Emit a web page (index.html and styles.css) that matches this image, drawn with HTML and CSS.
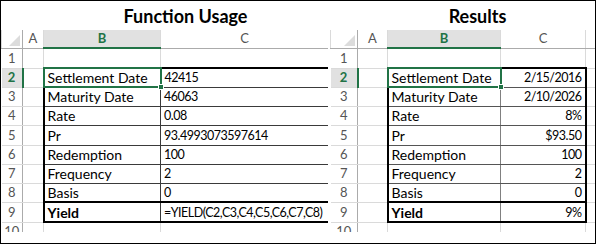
FILE: index.html
```html
<!DOCTYPE html>
<html>
<head>
<meta charset="utf-8">
<link rel="stylesheet" href="styles.css">
</head>
<body>
<div class="frame">
  <section class="sheet sheet-left">
    <h2 class="title">Function Usage</h2>
    <div class="viewport">
      <table class="grid grid-left">
        <colgroup><col class="c-rh"><col class="c-a"><col class="c-b"><col class="c-c"></colgroup>
        <tr class="hdr">
          <th class="corner"><svg class="tri" width="11" height="11" viewBox="0 0 11 11"><polygon points="11,0 11,11 0,11" fill="#dcdcdc"/></svg></th>
          <th>A</th><th class="sel-col">B</th><th>C</th>
        </tr>
        <tr><th class="rh">1</th><td></td><td></td><td></td></tr>
        <tr><th class="rh sel-row">2</th><td></td><td class="d dl dt active">Settlement Date<span class="handle"></span></td><td class="d dr dt val">42415</td></tr>
        <tr><th class="rh">3</th><td></td><td class="d dl">Maturity Date</td><td class="d dr val">46063</td></tr>
        <tr><th class="rh">4</th><td></td><td class="d dl">Rate</td><td class="d dr val">0.08</td></tr>
        <tr><th class="rh">5</th><td></td><td class="d dl">Pr</td><td class="d dr val">93.4993073597614</td></tr>
        <tr><th class="rh">6</th><td></td><td class="d dl">Redemption</td><td class="d dr val">100</td></tr>
        <tr><th class="rh">7</th><td></td><td class="d dl">Frequency</td><td class="d dr val">2</td></tr>
        <tr><th class="rh">8</th><td></td><td class="d dl">Basis</td><td class="d dr val">0</td></tr>
        <tr><th class="rh">9</th><td></td><td class="d dl db strong">Yield</td><td class="d dr db val">=YIELD(C2,C3,C4,C5,C6,C7,C8)</td></tr>
        <tr><th class="rh">10</th><td></td><td></td><td></td></tr>
      </table>
    </div>
  </section>
  <section class="sheet sheet-right">
    <h2 class="title">Results</h2>
    <div class="viewport">
      <table class="grid grid-right">
        <colgroup><col class="r-rh"><col class="r-a"><col class="r-b"><col class="r-c"><col class="r-d"></colgroup>
        <tr class="hdr">
          <th class="corner"><svg class="tri" width="11" height="11" viewBox="0 0 11 11"><polygon points="11,0 11,11 0,11" fill="#dcdcdc"/></svg></th>
          <th>A</th><th class="sel-col">B</th><th>C</th><th></th>
        </tr>
        <tr><th class="rh">1</th><td></td><td></td><td></td><td></td></tr>
        <tr><th class="rh sel-row">2</th><td></td><td class="d dl dt active">Settlement Date<span class="handle"></span></td><td class="d dr dt num val">2/15/2016</td><td></td></tr>
        <tr><th class="rh">3</th><td></td><td class="d dl">Maturity Date</td><td class="d dr num val">2/10/2026</td><td></td></tr>
        <tr><th class="rh">4</th><td></td><td class="d dl">Rate</td><td class="d dr num val">8%</td><td></td></tr>
        <tr><th class="rh">5</th><td></td><td class="d dl">Pr</td><td class="d dr num val">$93.50</td><td></td></tr>
        <tr><th class="rh">6</th><td></td><td class="d dl">Redemption</td><td class="d dr num val">100</td><td></td></tr>
        <tr><th class="rh">7</th><td></td><td class="d dl">Frequency</td><td class="d dr num val">2</td><td></td></tr>
        <tr><th class="rh">8</th><td></td><td class="d dl">Basis</td><td class="d dr num val">0</td><td></td></tr>
        <tr><th class="rh">9</th><td></td><td class="d dl db strong">Yield</td><td class="d dr db num val">9%</td><td></td></tr>
        <tr><th class="rh">10</th><td></td><td></td><td></td><td></td></tr>
      </table>
    </div>
  </section>
</div>
</body>
</html>
```

FILE: styles.css
```css
* { box-sizing: border-box; margin: 0; padding: 0; }
body { margin: 0; background: #fff; font-family: Lato, "Liberation Sans", sans-serif; }

.frame {
  width: 596px;
  height: 244px;
  border: 1px solid #000;
  display: flex;
  gap: 2px;
  overflow: hidden;
}
.sheet { display: flex; flex-direction: column; flex: none; }
.sheet-left { width: 327px; }
.sheet-right { width: 265px; }

.title {
  height: 29px;
  font-size: 18px;
  font-weight: 700;
  color: #000;
  display: flex;
  align-items: center;
  justify-content: center;
}
.sheet-left .title { padding-left: 42px; }
.sheet-right .title { padding-left: 30px; }

.viewport { height: 202px; overflow: hidden; }

.grid {
  border-collapse: collapse;
  table-layout: fixed;
  font-size: 14px;
  color: #000;
}
.grid-left { width: 327px; }
.grid-right { width: 267px; }
.c-rh { width: 21px; } .c-a { width: 21px; } .c-b { width: 117px; } .c-c { width: 168px; }
.r-rh { width: 27px; } .r-a { width: 30px; } .r-b { width: 113px; } .r-c { width: 85px; } .r-d { width: 12px; }

.grid tr { height: 19px; }
.grid tr.hdr { height: 18px; }
.grid tr:nth-child(2) { height: 20px; }
.grid tr:nth-child(6), .grid tr:nth-child(10) { height: 20px; }

.grid td, .grid th {
  border: 1px solid #dadada;
  padding: 0 3px;
  white-space: nowrap;
  overflow: hidden;
  text-align: left;
  font-weight: 400;
  line-height: 17px;
  vertical-align: middle;
}
.grid td.val {
  font-size: 12.5px;
  letter-spacing: -0.5px;
}

.hdr th {
  font-size: 13px;
  color: #555;
  text-align: center;
  border-bottom: 1px solid #ababab;
  border-top: none;
}
.hdr th.corner { position: relative; padding: 0; border-right: 1px solid #ababab; }
.tri { position: absolute; right: 2px; bottom: 2px; }
.hdr th.sel-col {
  background: #e1e1e1;
  color: #217346;
  font-weight: 700;
  border-bottom: 2px solid #217346;
}
.rh {
  font-size: 13px;
  color: #555;
  text-align: center !important;
  padding: 0 !important;
  border-left: none !important;
  border-right: 1px solid #ababab !important;
}
.rh.sel-row {
  background: #e1e1e1;
  color: #217346;
  font-weight: 700 !important;
  border-right: 2px solid #217346 !important;
}

.grid td.d { border: 1px solid #3a3a3a; }
.grid td.dl { border-left: 2px solid #000; }
.grid td.dr { border-right: 2px solid #000; }
.grid td.dt { border-top: 2px solid #000; }
.grid td.db { border-top: 2px solid #000; border-bottom: 2px solid #000; }
.grid-right td.d { border-bottom-color: #555; }
.grid-right td.dl { border-right: 1px solid #808080; }
.grid-right td.dl.active { border-right: 2px solid #217346; }
.grid-right td.dr { border-right: 2px solid #000; border-left-color: #808080; }
.grid-right td.db { border-top: 2px solid #000; border-bottom: 2px solid #000; }
.grid-right td.dt { border-top: 2px solid #000; }
.grid td.active { border: 2px solid #217346; position: relative; overflow: visible; }
.grid td.num { text-align: right; padding-right: 3px; }
.strong { font-weight: 700 !important; }

.handle {
  position: absolute;
  right: -4px;
  bottom: -4px;
  width: 6px;
  height: 6px;
  background: #217346;
  border: 1px solid #fff;
  z-index: 2;
}
```
